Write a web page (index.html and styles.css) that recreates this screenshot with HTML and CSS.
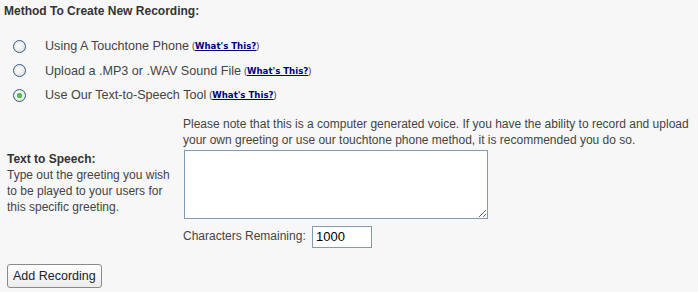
FILE: index.html
```html
<!DOCTYPE html>
<html lang="en">

<head>
    <meta charset="UTF-8">
    <title>Add Recording</title>
    <link rel="stylesheet" href="styles.css">
</head>

<body>
    <div class="section-title">Method To Create New Recording:</div>

    <!-- recording methods -->
    <div class="methods">
        <label class="method">
            <input type="radio" name="method" value="phone">
            <span class="method-text">Using A Touchtone Phone</span>
            <span class="help">(<a href="#">What's This?</a>)</span>
        </label>
        <label class="method">
            <input type="radio" name="method" value="upload">
            <span class="method-text">Upload a .MP3 or .WAV Sound File</span>
            <span class="help">(<a href="#">What's This?</a>)</span>
        </label>
        <label class="method">
            <input type="radio" name="method" value="tts" checked>
            <span class="method-text">Use Our Text-to-Speech Tool</span>
            <span class="help">(<a href="#">What's This?</a>)</span>
        </label>
    </div>

    <!-- text to speech -->
    <div class="tts">
        <div></div>
        <p class="note">Please note that this is a computer generated voice. If you have the ability to record and upload your own greeting or use our touchtone phone method, it is recommended you do so.</p>

        <div class="tts-label">
            <b>Text to Speech:</b>
            Type out the greeting you wish to be played to your users for this specific greeting.
        </div>
        <div><textarea class="tts-text"></textarea></div>

        <div></div>
        <div class="remaining">
            Characters Remaining: <input type="text" class="count" value="1000">
        </div>
    </div>

    <button class="add-btn">Add Recording</button>
</body>

</html>
```

FILE: styles.css
```css
body {
    margin: 0;
    padding: 4px 7px;
    background: #f7f7f7;
    color: #333;
    font-family: 'Liberation Sans', Arial, sans-serif;
    font-size: 12px;
}

.section-title {
    font-weight: bold;
    font-size: 12px;
    margin-left: -3px;
    line-height: 14px;
}

.methods {
    margin-top: 16px;
}

.method {
    display: flex;
    align-items: center;
    height: 24.5px;
    margin-left: 6px;
}

.method input {
    appearance: none;
    -webkit-appearance: none;
    margin: 0 19px 0 0;
    width: 13px;
    height: 13px;
    border: 1px solid #2f5a85;
    border-radius: 50%;
    background: radial-gradient(circle at 40% 40%, #ffffff, #dcdcd6);
    display: flex;
    align-items: center;
    justify-content: center;
}

.method input:checked::after {
    content: "";
    width: 5px;
    height: 5px;
    border-radius: 50%;
    background: radial-gradient(circle, #5ed35e, #229b22);
}

.method-text {
    font-size: 12.6px;
    color: #444;
}

.help {
    font-size: 9px;
    margin-left: 3px;
    color: #333;
}

.help a {
    color: #000080;
    font-family: 'DejaVu Sans', Verdana, sans-serif;
    font-weight: bold;
    font-size: 8.6px;
}

.tts {
    display: grid;
    grid-template-columns: 176px auto;
    margin-top: 8px;
}

.note {
    margin: 0;
    font-size: 12px;
    line-height: 16px;
    color: #444;
}

.tts-label {
    align-self: center;
    font-size: 12px;
    line-height: 16px;
    color: #444;
}

.tts-label b {
    display: block;
    color: #333;
}

.tts-text {
    box-sizing: border-box;
    width: 304px;
    height: 69px;
    margin: 2px 0 0 1px;
    border: 1px solid #7f9db9;
    background: #fff;
    display: block;
    resize: both;
}

.remaining {
    margin-top: 7px;
    font-size: 12px;
    color: #444;
}

.count {
    box-sizing: border-box;
    width: 60px;
    height: 22px;
    margin-left: 3px;
    padding: 0 3px;
    border: 1px solid #7f9db9;
    font-family: 'Liberation Sans', Arial, sans-serif;
    font-size: 13px;
    color: #000;
    vertical-align: middle;
}

.add-btn {
    margin-top: 16px;
    height: 24px;
    padding: 0 5px;
    font-family: 'Liberation Sans', Arial, sans-serif;
    font-size: 12.5px;
    color: #222;
    background: linear-gradient(#fff, #ececec);
    border: 1px solid #8a8a8a;
    border-radius: 3px;
}
```
